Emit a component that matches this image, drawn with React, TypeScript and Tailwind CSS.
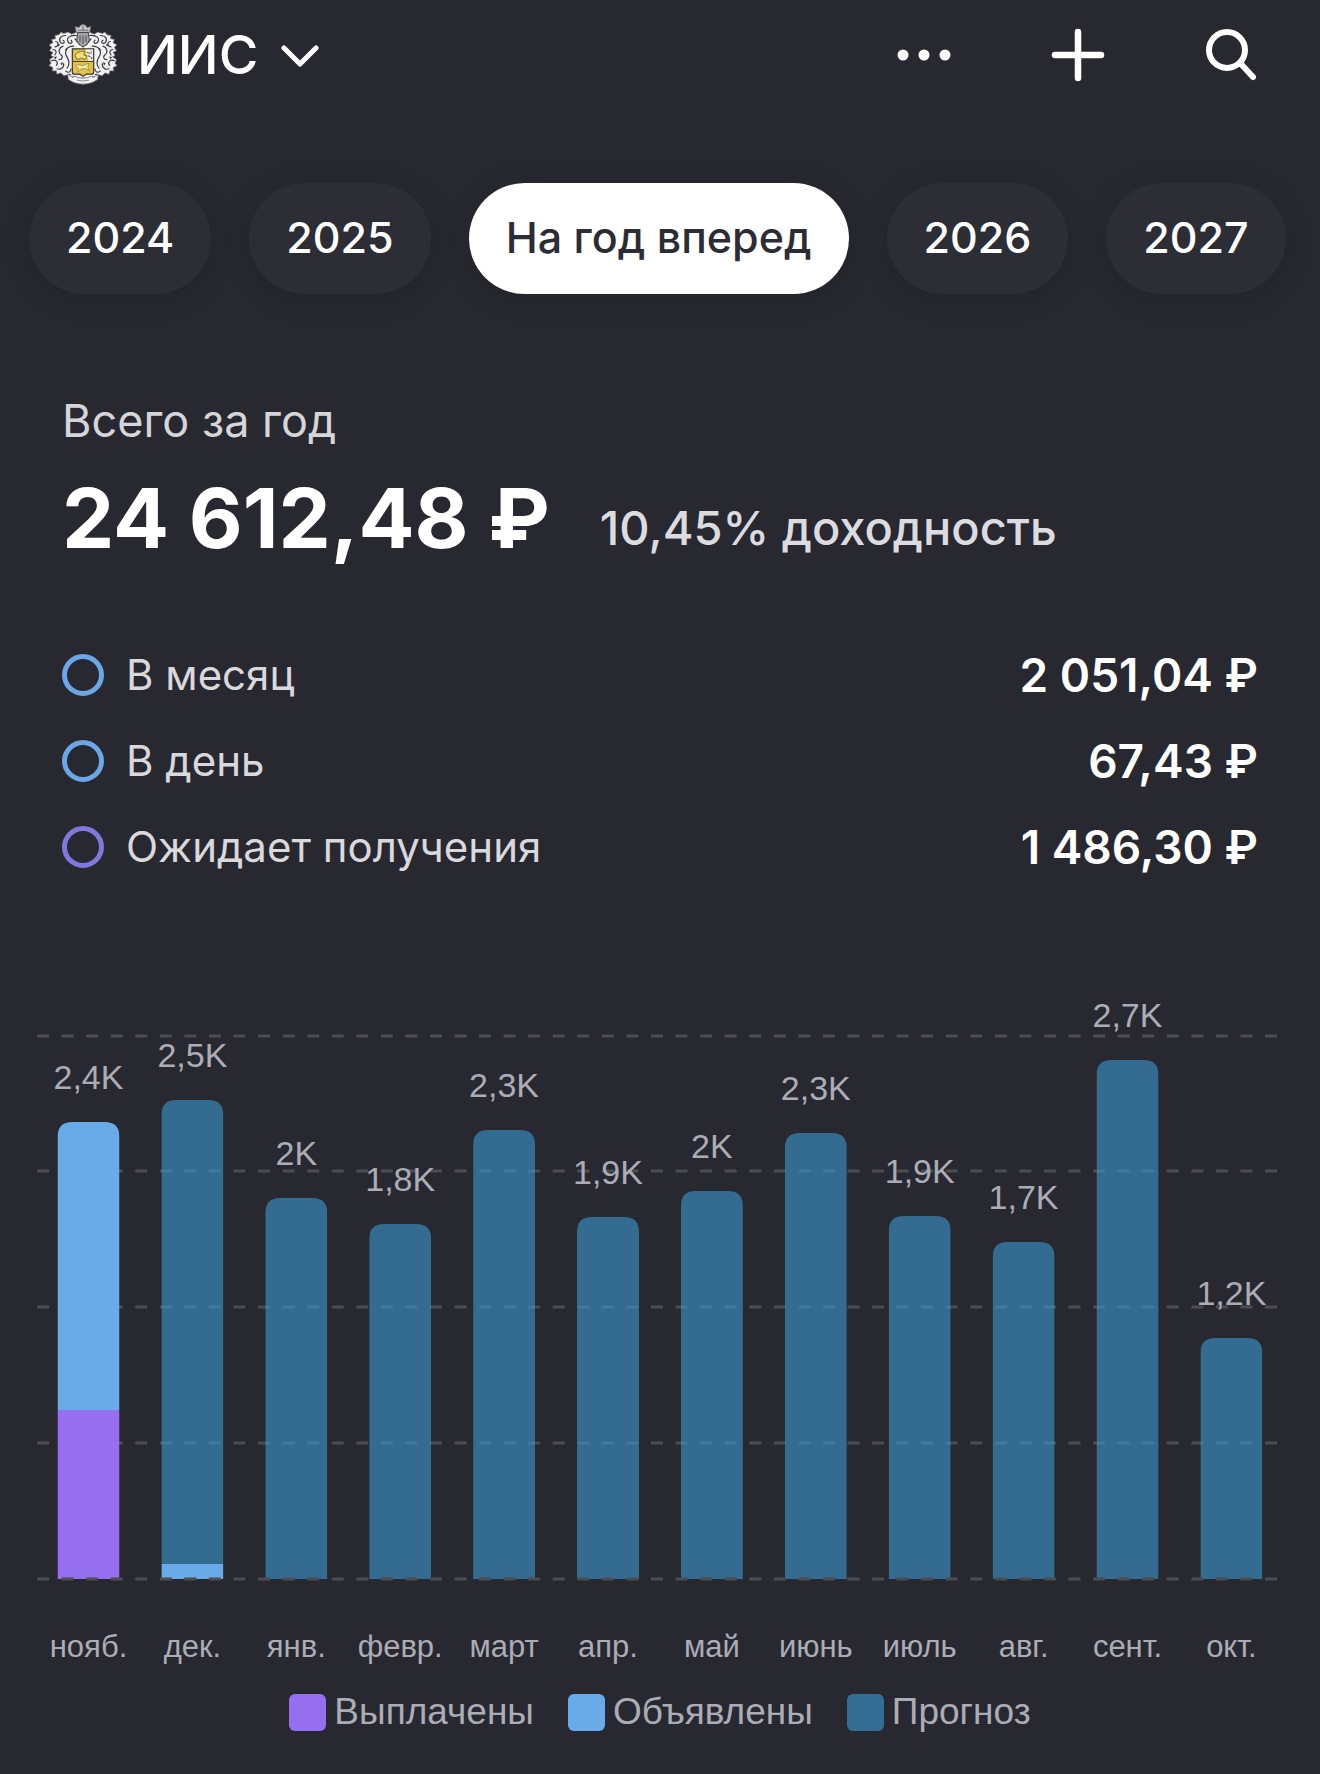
import React, { useState } from 'react';
import clsx from 'clsx';

const periods = ['2024', '2025', 'На год вперед', '2026', '2027'];

const stats = [
  { label: 'В месяц', value: '2\u00a0051,04\u00a0₽', ring: 'border-[#6ba6e6]' },
  { label: 'В день', value: '67,43\u00a0₽', ring: 'border-[#6ba6e6]' },
  { label: 'Ожидает получения', value: '1\u00a0486,30\u00a0₽', ring: 'border-[#8079dc]' },
];

// Segment heights are in chart units, stacked from the axis upwards
const months = [
  { name: 'нояб.', total: '2,4K', paid: 169, declared: 288, forecast: 0 },
  { name: 'дек.', total: '2,5K', paid: 0, declared: 15, forecast: 464 },
  { name: 'янв.', total: '2K', paid: 0, declared: 0, forecast: 381 },
  { name: 'февр.', total: '1,8K', paid: 0, declared: 0, forecast: 355 },
  { name: 'март', total: '2,3K', paid: 0, declared: 0, forecast: 449 },
  { name: 'апр.', total: '1,9K', paid: 0, declared: 0, forecast: 362 },
  { name: 'май', total: '2K', paid: 0, declared: 0, forecast: 388 },
  { name: 'июнь', total: '2,3K', paid: 0, declared: 0, forecast: 446 },
  { name: 'июль', total: '1,9K', paid: 0, declared: 0, forecast: 363 },
  { name: 'авг.', total: '1,7K', paid: 0, declared: 0, forecast: 337 },
  { name: 'сент.', total: '2,7K', paid: 0, declared: 0, forecast: 519 },
  { name: 'окт.', total: '1,2K', paid: 0, declared: 0, forecast: 241 },
];

const legend = [
  { label: 'Выплачены', color: 'bg-[#966ff0]' },
  { label: 'Объявлены', color: 'bg-[#69aae9]' },
  { label: 'Прогноз', color: 'bg-[#346d93]' },
];

const Crest = () => (
  <svg viewBox="0 0 204 182" className="h-[61px] w-[68px] shrink-0" aria-hidden="true">
    {/* Mantling, one half mirrored to the other */}
    {[false, true].map((flip) => (
      <g key={String(flip)} transform={flip ? 'translate(204 0) scale(-1 1)' : undefined}>
        <path
          d="M102 30 L84 24 L68 30 L58 24 L44 28 L36 24 L30 32 L18 34 L20 44 L8 46 L12 56 L1 62 L8 70 L2 80 L12 84 L6 94 L14 98 L2 106 L6 118 L0 124 L12 130 L10 140 L22 140 L24 150 L36 146 L44 154 L56 152 L66 160 L74 156 L78 172 L102 174 Z"
          fill="#f2f2f3"
          stroke="#8b8b90"
          strokeWidth="2"
        />
        <g fill="none" stroke="#3b3b42" strokeWidth="3.5" strokeLinecap="round">
          <path d="M82 34 C62 32 50 42 58 54 C64 62 74 54 66 48" />
          <path d="M74 66 C52 66 44 84 54 98 C60 108 62 122 54 132" />
          <path d="M50 34 C34 34 26 46 36 56 C44 62 50 52 42 48" />
          <path d="M20 52 C32 54 28 68 18 68" />
          <path d="M42 66 C30 70 26 84 36 92 C44 98 38 108 30 106" />
          <path d="M12 76 C22 76 24 86 18 92" />
          <path d="M8 110 C20 104 30 114 22 124" />
          <path d="M24 134 C34 138 46 130 44 118" />
          <path d="M50 140 C58 148 66 144 66 134" />
          <path d="M78 44 L92 62" />
        </g>
        <g fill="#3b3b42">
          <path d="M26 58 l8 4 l-6 5 z" />
          <path d="M48 76 l7 -7 l-1 12 z" />
          <path d="M14 100 l9 -4 l-2 9 z" />
          <path d="M34 118 l8 -5 l-3 11 z" />
          <path d="M60 148 l8 4 l-7 2 z" />
        </g>
      </g>
    ))}

    {/* Crown and helmet */}
    <path d="M82 24 L79 7 L90 11 L94 4 L102 0 L110 4 L114 11 L125 7 L122 24 Z" fill="#c9c9cc" stroke="#77777c" strokeWidth="2" />
    <path d="M86 18 H118 M102 3 V18" stroke="#5b5b61" strokeWidth="2.5" />
    <path d="M86 25 H118 L121 48 C118 58 110 64 102 68 C94 64 86 58 83 48 Z" fill="#a4a4a9" stroke="#46464d" strokeWidth="3" />
    <path d="M93 34 V54 M102 34 V60 M111 34 V54" stroke="#4a4a51" strokeWidth="3" />
    <path d="M82 58 C86 70 94 72 102 80 C110 72 118 70 122 58" fill="none" stroke="#ffffff" strokeWidth="6" />

    {/* Shield */}
    <path d="M70 74 H134 V144 Q134 150 127 150 H112 L102 156 L92 150 H77 Q70 150 70 144 Z" fill="#e0c348" stroke="#35342f" strokeWidth="3.5" />
    <path d="M110 76 H132 V110 H118 Z" fill="#efefef" />
    <path d="M71 112 H133" stroke="#4c4426" strokeWidth="3" />
    <path d="M78 94 C84 84 94 80 108 82 L104 92 L114 96 L108 106 L96 102 L84 106 Z" fill="#f3dd83" stroke="#6d5c1e" strokeWidth="2.5" />
    <path d="M114 84 L122 88 M126 82 v6 M116 94 l8 4 M128 98 v7" stroke="#46464d" strokeWidth="3" />
    <path d="M80 126 C86 118 92 124 100 124 C108 124 112 118 120 118 L116 128 L122 140 L112 134 L98 134 L86 142 L88 132 Z" fill="#f7e9ae" stroke="#8b7426" strokeWidth="2" />

    {/* Motto ribbon */}
    <path d="M56 150 L72 160 L76 156 Q102 168 128 156 L132 160 L148 150 L146 166 L132 174 Q102 186 72 174 L58 166 Z" fill="#f2f2f3" stroke="#6c6c72" strokeWidth="2.5" />
    <path d="M84 168 Q102 173 120 168" fill="none" stroke="#8b8b90" strokeWidth="3" />
  </svg>
);

const Header = () => (
  <header className="flex h-[109px] items-center justify-between pr-[61px] pl-[49px] text-white">
    <button type="button" className="flex items-center">
      <Crest />
      <span className="ml-5 text-[54px] leading-[60px] font-medium">ИИС</span>
      <svg viewBox="0 0 40 24" className="ml-[22px] h-6 w-10" fill="none" stroke="currentColor" strokeWidth="5" strokeLinecap="round" strokeLinejoin="round" aria-hidden="true">
        <path d="M4 5 L20 21 L36 5" />
      </svg>
    </button>
    <div className="flex items-center gap-[100px]">
      <button type="button" aria-label="Ещё">
        <svg viewBox="0 0 54 54" className="size-[54px]" fill="currentColor">
          <circle cx="6" cy="27" r="5.5" />
          <circle cx="27" cy="27" r="5.5" />
          <circle cx="48" cy="27" r="5.5" />
        </svg>
      </button>
      <button type="button" aria-label="Добавить">
        <svg viewBox="0 0 54 54" className="size-[54px]" fill="none" stroke="currentColor" strokeWidth="6.5" strokeLinecap="round">
          <path d="M27 4 V50 M4 27 H50" />
        </svg>
      </button>
      <button type="button" aria-label="Поиск">
        <svg viewBox="0 0 54 54" className="size-[54px]" fill="none" stroke="currentColor" strokeWidth="6" strokeLinecap="round">
          <circle cx="22" cy="22" r="18" />
          <path d="M36 36 L48 49" />
        </svg>
      </button>
    </div>
  </header>
);

const axisY = 619;

const Chart = () => (
  <svg viewBox="0 0 1320 710" className="mt-[70px] w-full" role="img" aria-label="Выплаты по месяцам">
    {[76, 211, 347, 483].map((y) => (
      <line key={y} x1="37" x2="1283" y1={y} y2={y} stroke="#4c4d51" strokeWidth="3" strokeDasharray="12 12.56" />
    ))}
    {months.map((month, index) => {
      const center = 88.5 + index * 103.9;
      const left = center - 31;
      const height = month.paid + month.declared + month.forecast;
      const top = axisY - height;
      const clipId = `bar-${index}`;
      return (
        <g key={month.name}>
          <clipPath id={clipId}>
            <path d={`M${left} ${axisY} V${top + 15} q0 -15 15 -15 h32 q15 0 15 15 V${axisY} Z`} />
          </clipPath>
          <g clipPath={`url(#${clipId})`}>
            <rect x={left} y={top} width="62" height={month.forecast} fill="#3c98d2" fillOpacity="0.6" />
            <rect x={left} y={top + month.forecast} width="62" height={month.declared} fill="#69aae9" />
            <rect x={left} y={axisY - month.paid} width="62" height={month.paid} fill="#966ff0" />
          </g>
          <text x={center} y={top - 33} textAnchor="middle" fill="#abadb6" fontSize="34">
            {month.total}
          </text>
          <text x={center} y="697" textAnchor="middle" fill="#abadb6" fontSize="31">
            {month.name}
          </text>
        </g>
      );
    })}
    <line x1="37" x2="1283" y1={axisY} y2={axisY} stroke="#4c4d51" strokeWidth="3" strokeDasharray="12 12.56" />
  </svg>
);

const App = () => {
  const [period, setPeriod] = useState('На год вперед');

  return (
    <main className="min-h-screen bg-[#282830] font-['Inter','Roboto',sans-serif]">
      <Header />

      {/* Period switcher */}
      <nav className="flex gap-[38px] overflow-hidden pt-[74px] pr-7 pb-10 pl-[29px]">
        {periods.map((name) => (
          <button
            key={name}
            type="button"
            aria-pressed={name === period}
            onClick={() => setPeriod(name)}
            className={clsx(
              'h-[111px] shrink-0 rounded-full px-[37px] pb-[3px] text-[43px] leading-[52px] font-medium whitespace-nowrap shadow-[0_4px_24px_rgba(24,26,28,0.3)]',
              name === period ? 'bg-white text-[#2c2c35]' : 'bg-[#2d2d36] text-white'
            )}
          >
            {name}
          </button>
        ))}
      </nav>

      {/* Year total */}
      <section className="px-[62px] pt-[59px]">
        <h2 className="text-[45px] leading-[56px] font-normal text-[#d5d5da]">Всего за год</h2>
        <div className="mt-[19px] flex items-end gap-[50px] whitespace-nowrap">
          <p className="text-[83px] leading-[100px] font-bold text-white">24&nbsp;612,48&nbsp;₽</p>
          <p className="mb-[10px] text-[47px] leading-[60px] font-medium text-[#dcdce0]">10,45% доходность</p>
        </div>
      </section>

      <dl className="mt-[64px] px-[62px]">
        {stats.map((stat) => (
          <div key={stat.label} className="flex h-[86px] items-center justify-between">
            <dt className="flex items-center gap-[22px] text-[42px] leading-[52px] text-[#d9d9dd]">
              <span className={clsx('size-[42px] rounded-full border-5', stat.ring)} />
              {stat.label}
            </dt>
            <dd className="text-[46px] leading-[56px] font-semibold text-white">{stat.value}</dd>
          </div>
        ))}
      </dl>

      <section className="font-['Liberation_Sans',Arial,sans-serif]">
        <Chart />
        <ul className="mt-[22px] flex justify-center gap-[34px] pb-5 text-[37px] leading-[40px] text-[#abadb6]">
          {legend.map((item) => (
            <li key={item.label} className="flex items-center gap-2">
              <span className={clsx('size-[37px] rounded-md', item.color)} />
              {item.label}
            </li>
          ))}
        </ul>
      </section>
    </main>
  );
};

export default App;
